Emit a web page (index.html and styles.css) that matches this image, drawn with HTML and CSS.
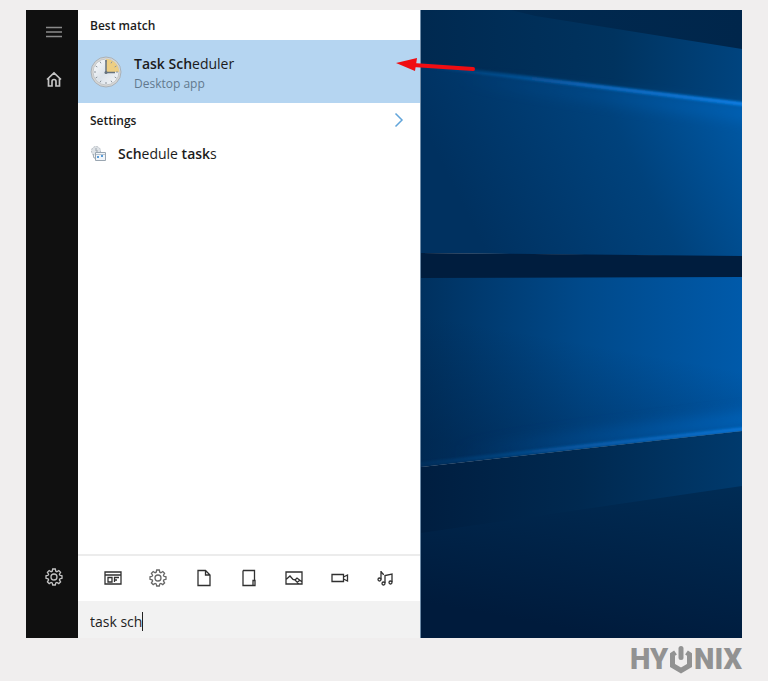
FILE: index.html
```html
<!DOCTYPE html>
<html lang="en">
<head>
    <meta charset="UTF-8">
    <meta name="viewport" content="width=device-width, initial-scale=1.0">
    <title>Task Scheduler</title>
    <link rel="stylesheet" href="styles.css">
</head>
<body>
    <svg class="defs" aria-hidden="true">
        <symbol id="gear" viewBox="0 0 18 18">
            <path d="M7.7 1h2.6l.5 2.2 1.1.5 1.9-1.2 1.8 1.8-1.2 1.9.5 1.1 2.1.5v2.5l-2.1.5-.5 1.1 1.2 1.9-1.8 1.8-1.9-1.2-1.1.5-.5 2.1H7.7l-.5-2.1-1.1-.5-1.9 1.2-1.8-1.8 1.2-1.9-.5-1.1-2.1-.5V7.8l2.1-.5.5-1.1-1.2-1.9 1.8-1.8 1.9 1.2 1.1-.5z"/>
            <circle cx="9" cy="9" r="3"/>
        </symbol>
    </svg>

    <main class="screen">
        <nav class="sidebar">
            <button class="side-btn" aria-label="Menu">
                <svg class="icon" viewBox="0 0 18 18"><path d="M1 4.5h16M1 9h16M1 13.5h16"/></svg>
            </button>
            <button class="side-btn" aria-label="Home">
                <svg class="icon home" viewBox="0 0 18 18"><path d="M2 9.5 9 3l7 6.5M3.5 8.5V16H7v-4.5a2 2 0 0 1 4 0V16h3.500V8.500"/></svg>
            </button>
            <button class="side-btn settings-btn" aria-label="Settings">
                <svg class="icon"><use href="#gear"/></svg>
            </button>
        </nav>

        <section class="panel">
            <h2 class="heading">Best match</h2>
            <a class="best" href="#">
                <svg class="clock" viewBox="0 0 32 32">
                    <defs>
                        <linearGradient id="face" x1="0" y1="0" x2="1" y2="1">
                            <stop offset="0" stop-color="#fff"/>
                            <stop offset=".5" stop-color="#dce3ea"/>
                            <stop offset="1" stop-color="#f7f8f9"/>
                        </linearGradient>
                    </defs>
                    <circle cx="16" cy="16" r="15" fill="#d8d7d4" stroke="#a9b1b8"/>
                    <circle cx="16" cy="16" r="13" fill="url(#face)" stroke="#c4c7c9"/>
                    <path d="M16 16V3a13 13 0 0 1 13 13z" fill="#edce83"/>
                    <path d="M16 4v2M16 26v2M4 16h2M26 16h2M10 5.6l1 1.7M21 24.7l1 1.7M5.600 10l1.700 1M24.700 21l1.700 1M5.600 22l1.700-1M24.700 11l1.700-1M10 26.400l1-1.700M21 7.300l1-1.700" stroke="#8d969e"/>
                    <path d="M16 4v13M15 16.5h10" stroke="#66727d" stroke-width="1.5" fill="none"/>
                    <circle cx="16" cy="16.5" r="1.5" fill="#66727d"/>
                </svg>
                <span class="best-text">
                    <span class="title"><b>Task Sch</b>eduler</span>
                    <span class="sub">Desktop app</span>
                </span>
            </a>
            <a class="heading more" href="#">Settings
                <svg class="chevron" viewBox="0 0 10 16"><path d="M1.5 1.5 8 8l-6.5 6.5"/></svg>
            </a>
            <a class="result" href="#">
                <svg class="small-icon" viewBox="0 0 18 18">
                    <circle cx="6" cy="6" r="4.5" fill="#dfe3e7" stroke="#b4bbc2" stroke-dasharray="2 1"/>
                    <path d="M3 9l1 4h3M6 3v3h2" fill="none" stroke="#9ca6af"/>
                    <path d="M5.5 7.5h10v8h-10z" fill="#f1f5f9" stroke="#9aa6b1"/>
                    <path d="M6 9.5h9" stroke="#b9c4ce"/>
                    <path d="M7 12h2M11 11h2" stroke="#5a9cd8" stroke-width="2"/>
                </svg>
                <span class="title"><b>Sch</b>edule <b>task</b>s</span>
            </a>

            <div class="filters">
                <button class="filter" aria-label="Apps">
                    <svg class="icon" viewBox="0 0 18 18"><path d="M1 3h16v12H1zM1 6h16M4 8.5h4V13H4zM10.500 13V8.500H15M10.500 11H13"/></svg>
                </button>
                <button class="filter gear-filter" aria-label="Settings">
                    <svg class="icon"><use href="#gear"/></svg>
                </button>
                <button class="filter" aria-label="Documents">
                    <svg class="icon" viewBox="0 0 18 18"><path d="M3 1.5h7.5L15 6v10.5H3zM10.500 1.500V6H15"/></svg>
                </button>
                <button class="filter" aria-label="Folders">
                    <svg class="icon" viewBox="0 0 18 18"><path d="M3 1.5h11.5v10M12.5 16.5H3v-15M13 11.5h2v5h-2z"/></svg>
                </button>
                <button class="filter" aria-label="Photos">
                    <svg class="icon" viewBox="0 0 18 18"><path d="M1 3h16v12H1zM1 10.5 5 7l3 3.5 2 .5 2-2 4.500 3.500M10 11l4 4M12 13.500l2.500-2"/></svg>
                </button>
                <button class="filter" aria-label="Videos">
                    <svg class="icon" viewBox="0 0 18 18"><path d="M1 5.5h11.5v7H1zM12.5 8l4-2v6l-4-2M16.5 5.5v7"/></svg>
                </button>
                <button class="filter" aria-label="Music">
                    <svg class="icon" viewBox="0 0 18 18"><path d="M5 10.5V2c0 2 2 2 2.500 4M9 14V6.500L16 5v8"/><circle cx="3.5" cy="10.5" r="1.5"/><circle cx="7.5" cy="14.5" r="1.5"/><circle cx="14.5" cy="13.5" r="1.5"/></svg>
                </button>
            </div>
            <label class="search">
                <input class="search-input" type="text" value="task sch" aria-label="Search">
                <span class="caret"></span>
            </label>
        </section>

        <svg class="desktop" viewBox="0 0 322 628" preserveAspectRatio="none" aria-hidden="true">
            <defs>
                <linearGradient id="sky" x1="0" y1="0" x2="1" y2="0">
                    <stop offset="0" stop-color="#002950"/>
                    <stop offset=".6" stop-color="#00335f"/>
                    <stop offset="1" stop-color="#00447f"/>
                </linearGradient>
                <linearGradient id="corner" x1="0" y1="0" x2="1" y2="0">
                    <stop offset="0" stop-color="#002950"/>
                    <stop offset="1" stop-color="#00264b"/>
                </linearGradient>
                <linearGradient id="paneTop" x1="0" y1=".3" x2="1" y2="0">
                    <stop offset="0" stop-color="#003160"/>
                    <stop offset=".55" stop-color="#00427c"/>
                    <stop offset="1" stop-color="#005cab"/>
                </linearGradient>
                <linearGradient id="paneLow" x1="0" y1="0" x2="1" y2="0">
                    <stop offset="0" stop-color="#00315f"/>
                    <stop offset=".5" stop-color="#00498a"/>
                    <stop offset="1" stop-color="#005aaa"/>
                </linearGradient>
                <linearGradient id="shade" x1=".8" y1="0" x2=".5" y2="1">
                    <stop offset=".4" stop-color="#001d40" stop-opacity="0"/>
                    <stop offset="1" stop-color="#001d40" stop-opacity=".4"/>
                </linearGradient>
                <linearGradient id="floor" x1="0" y1="0" x2="1" y2="0">
                    <stop offset="0" stop-color="#001e40"/>
                    <stop offset=".5" stop-color="#002950"/>
                    <stop offset="1" stop-color="#003a6d"/>
                </linearGradient>
                <linearGradient id="floorLow" x1="1" y1="0" x2=".6" y2="1">
                    <stop offset="0" stop-color="#002c55"/>
                    <stop offset="1" stop-color="#001b3c"/>
                </linearGradient>
                <linearGradient id="beam" gradientUnits="userSpaceOnUse" x1="0" y1="0" x2="322" y2="0">
                    <stop offset="0" stop-color="#0a4884" stop-opacity=".3"/>
                    <stop offset=".5" stop-color="#0864b7"/>
                    <stop offset="1" stop-color="#087fe6"/>
                </linearGradient>
                <linearGradient id="glow" gradientUnits="userSpaceOnUse" x1="0" y1="0" x2="322" y2="0">
                    <stop offset=".1" stop-color="#0068c4" stop-opacity="0"/>
                    <stop offset="1" stop-color="#0072d4"/>
                </linearGradient>
                <filter id="soft" filterUnits="userSpaceOnUse" x="-40" y="0" width="402" height="628"><feGaussianBlur stdDeviation="1"/></filter>
                <filter id="haze" filterUnits="userSpaceOnUse" x="-40" y="0" width="402" height="628"><feGaussianBlur stdDeviation="7"/></filter>
            </defs>
            <path d="M0 0h322v110H0z" fill="url(#sky)"/>
            <path d="M90 0h232v39L115 6z" fill="url(#corner)"/>
            <path d="M0 55 322 95v152L0 243z" fill="url(#paneTop)"/>
            <path d="M0 64 340 106" stroke="url(#glow)" stroke-width="12" opacity=".4" filter="url(#haze)"/>
            <path d="M-10 54 332 95" stroke="url(#beam)" stroke-width="4" filter="url(#soft)"/>
            <path d="M0 243 322 246v22L0 269z" fill="#001d3e"/>
            <path d="M0 268 322 267v154L0 457z" fill="url(#paneLow)"/>
            <path d="M0 268 322 267v154L0 457z" fill="url(#shade)"/>
            <path d="M0 448 340 408" stroke="url(#glow)" stroke-width="16" opacity=".5" filter="url(#haze)"/>
            <path d="M-10 455 332 418" stroke="url(#beam)" stroke-width="4" opacity=".7" filter="url(#soft)"/>
            <path d="M0 457 322 421v207H0z" fill="url(#floor)"/>
            <path d="M0 523 322 476v152H0z" fill="url(#floorLow)"/>
        </svg>

        <svg class="arrow" viewBox="0 0 82 16" aria-hidden="true">
            <path d="M18 7 78 11" stroke="#f00d12" stroke-width="4" stroke-linecap="round"/>
            <path d="M1 5 22 0 20 13z" fill="#f00d12"/>
        </svg>
    </main>

    <footer class="brand">
        <span>HY</span>
        <svg class="power" viewBox="0 0 26 30" aria-hidden="true">
            <path d="M7.5 7.5 4.500 9.500v11L13 25.500l8.500-5v-11l-3-2"/>
            <path d="M13 3.500v9" stroke-linecap="round"/>
        </svg>
        <span>NIX</span>
    </footer>
</body>
</html>
```
FILE: styles.css
```css
* {
    box-sizing: border-box;
}
body {
    margin: 0;
    min-height: 100vh;
    padding: 10px 26px 0;
    display: flex;
    flex-direction: column;
    background: #f0eeee;
    color: #1c1c1c;
    font-family: "Open Sans", "Noto Sans", sans-serif;
    font-size: 14px;
}
a {
    color: inherit;
    text-decoration: none;
}
button {
    padding: 0;
    border: 0;
    background: none;
    color: inherit;
}
b {
    font-weight: 600;
}
svg {
    display: block;
}
.defs {
    position: absolute;
    width: 0;
    height: 0;
}
.icon {
    width: 18px;
    height: 18px;
    fill: none;
    stroke: currentColor;
    stroke-width: 1.3;
}

.screen {
    position: relative;
    flex: 1;
    display: grid;
    grid-template-columns: 52px minmax(0, 342fr) minmax(0, 322fr);
}

/* left rail */
.sidebar {
    display: flex;
    flex-direction: column;
    padding-bottom: 36px;
    background: #101010;
    color: #c4c4c4;
}
.side-btn {
    display: flex;
    align-items: center;
    justify-content: center;
    width: 100%;
    height: 50px;
    padding-left: 4px;
}
.side-btn:first-child {
    height: 44px;
    color: #8a8a8a;
}
.home {
    stroke-width: 1.7;
}
.settings-btn {
    margin-top: auto;
}

/* results */
.panel {
    display: flex;
    flex-direction: column;
    background: #fff;
}
.heading {
    display: flex;
    align-items: center;
    justify-content: space-between;
    height: 30px;
    margin: 0;
    padding: 0 16px 0 12px;
    font-size: 12px;
    font-weight: 600;
}
.more {
    height: 34px;
}
.chevron {
    width: 10px;
    height: 16px;
    fill: none;
    stroke: #62a5da;
    stroke-width: 1.5;
}
.best {
    display: flex;
    align-items: center;
    gap: 12px;
    height: 63px;
    padding: 0 12px;
    background: #b5d5f1;
}
.clock {
    width: 32px;
    height: 32px;
}
.best-text {
    display: flex;
    flex-direction: column;
    padding-top: 2px;
}
.title {
    font-size: 14px;
    line-height: 22px;
}
.sub {
    color: #62798e;
    font-size: 12px;
    line-height: 18px;
}
.result {
    display: flex;
    align-items: center;
    gap: 10px;
    height: 34px;
    padding: 0 12px;
}
.small-icon {
    width: 18px;
    height: 18px;
}

.filters {
    display: flex;
    justify-content: space-around;
    margin-top: auto;
    height: 47px;
    padding: 0 12px 2px;
    border-top: 2px solid #ececec;
    color: #303030;
}
.filter {
    display: flex;
    align-items: center;
    justify-content: center;
    flex: 1;
}
.gear-filter {
    color: #666;
}
.search {
    display: flex;
    align-items: center;
    height: 37px;
    padding: 4px 12px 0;
    background: #f2f2f2;
}
.search-input {
    field-sizing: content;
    padding: 0;
    border: 0;
    outline: 0;
    background: none;
    color: #222;
    font: inherit;
}
.caret {
    width: 1px;
    height: 19px;
    background: #222;
}

.desktop {
    width: 100%;
    height: 100%;
    min-height: 0;
    contain: size;
    border-left: 1px solid #6f8ca8;
}
/* pointer laid over the result and the wallpaper */
.arrow {
    position: absolute;
    top: 48px;
    left: 369px;
    width: 82px;
    height: 16px;
}

.brand {
    display: flex;
    align-items: center;
    justify-content: flex-end;
    height: 43px;
    color: #929292;
    font-family: Roboto, sans-serif;
    font-size: 29px;
    font-weight: 900;
    line-height: 43px;
}
.power {
    width: 26px;
    height: 30px;
    fill: none;
    stroke: currentColor;
    stroke-width: 5;
}
```
